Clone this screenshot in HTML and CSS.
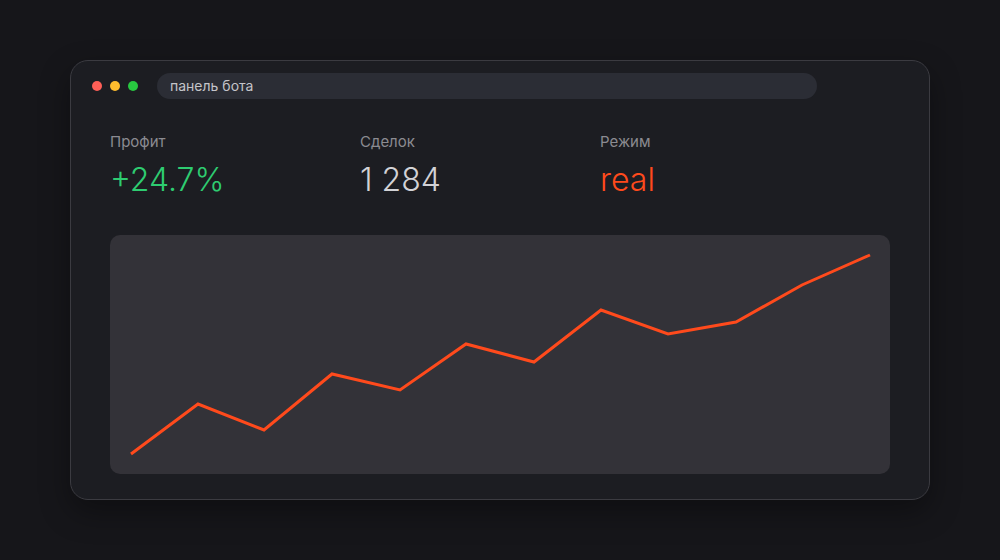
FILE: index.html
```html
<!DOCTYPE html>
<html lang="ru">
<head>
    <meta charset="UTF-8">
    <meta name="viewport" content="width=device-width, initial-scale=1.0">
    <title>Панель бота</title>
    <link rel="stylesheet" href="styles.css">
</head>
<body>
    <div class="window">
        <div class="topbar">
            <div class="dots">
                <span class="dot red"></span>
                <span class="dot yellow"></span>
                <span class="dot green"></span>
            </div>
            <div class="address">панель бота</div>
        </div>

        <div class="stats">
            <div class="stat">
                <div class="stat-label">Профит</div>
                <div class="stat-value profit">+24.7%</div>
            </div>
            <div class="stat">
                <div class="stat-label">Сделок</div>
                <div class="stat-value">1 284</div>
            </div>
            <div class="stat">
                <div class="stat-label">Режим</div>
                <div class="stat-value mode">real</div>
            </div>
        </div>

        <div class="chart">
            <svg viewBox="0 0 780 239" width="780" height="239">
                <polyline points="21,219 88,169 154,195 222,139 290,155 356,109 424,127 491,75 558,99 626,87 692,50 760,20"
                    fill="none" stroke="#ff4a1c" stroke-width="3" stroke-linejoin="miter" />
            </svg>
        </div>
    </div>
</body>
</html>
```

FILE: styles.css
```css
:root {
    --page: #16161a;
    --window: #1c1d22;
    --border: #3b3b41;
    --bar: #2b2d35;
    --chart: #333238;
    --label: #8b8b91;
    --text: #d2d2d6;
    --green: #2ecc71;
    --orange: #ff4a1c;
}

* {
    box-sizing: border-box;
    margin: 0;
    padding: 0;
    font-family: 'Inter', 'Noto Sans', sans-serif;
}

body {
    background-color: var(--page);
    width: 1000px;
    height: 560px;
    padding-top: 60px;
}

.window {
    width: 860px;
    height: 440px;
    margin: 0 auto;
    background-color: var(--window);
    border: 1px solid var(--border);
    border-radius: 18px;
    box-shadow: 0 12px 30px rgba(0, 0, 0, 0.35);
    padding: 12px 39px 25px;
}

.topbar {
    display: flex;
    align-items: center;
    margin-left: -18px;
}

.dots {
    display: flex;
    gap: 8px;
}

.dot {
    width: 10px;
    height: 10px;
    border-radius: 50%;
}

.dot.red { background: #ff5f57; }
.dot.yellow { background: #febc2e; }
.dot.green { background: #28c840; }

.address {
    margin-left: 19px;
    width: 660px;
    height: 26px;
    line-height: 26px;
    border-radius: 13px;
    background-color: var(--bar);
    color: #c4c4c9;
    font-size: 14px;
    padding-left: 13px;
}

.stats {
    display: grid;
    grid-template-columns: 250px 240px 1fr;
    margin-top: 33px;
}

.stat-label {
    font-size: 15px;
    line-height: 19px;
    color: var(--label);
}

.stat-value {
    margin-top: 9px;
    font-size: 32px;
    line-height: 40px;
    font-weight: 300;
    color: var(--text);
}

.stat-value.profit {
    color: var(--green);
}

.stat-value.mode {
    color: var(--orange);
}

.chart {
    margin-top: 35px;
    width: 780px;
    height: 239px;
    border-radius: 10px;
    background-color: var(--chart);
    overflow: hidden;
}

.chart svg {
    display: block;
}
```
